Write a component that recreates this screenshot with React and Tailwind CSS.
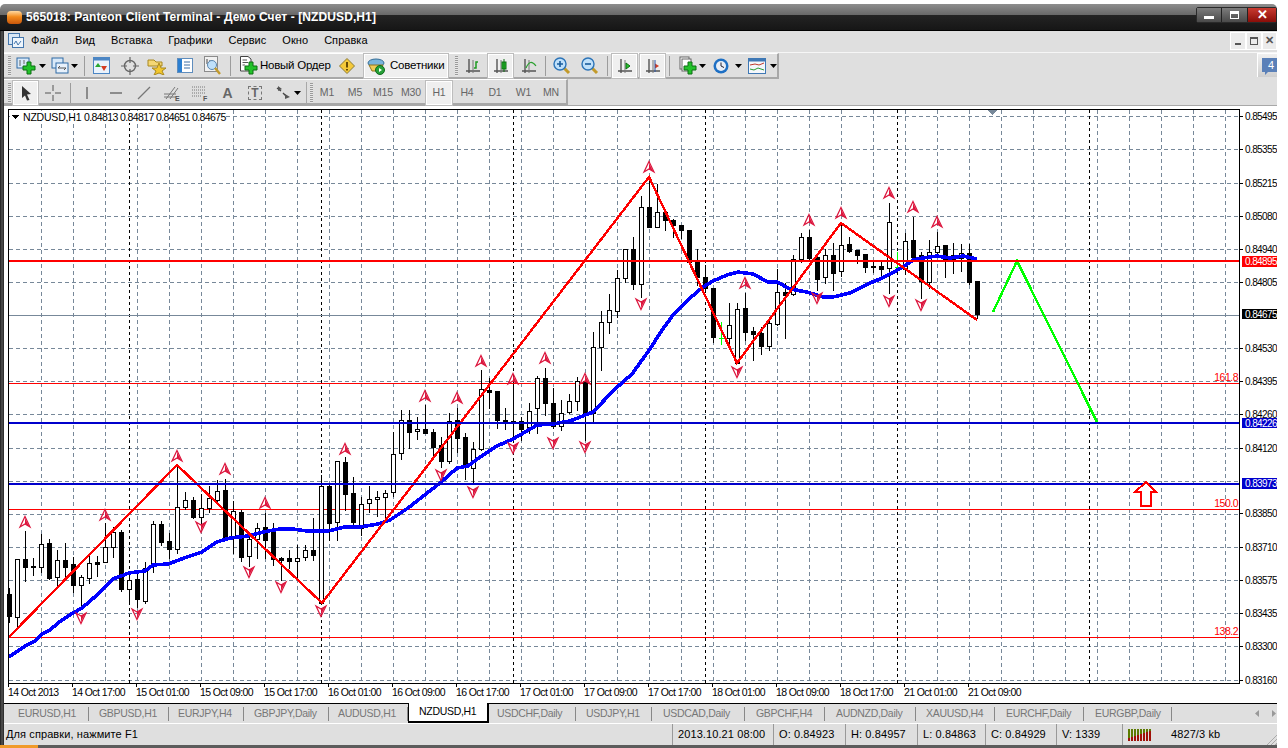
import React from 'react';

// hi, top, bottom, lo, black (1) / white (0) / green doji (2) -- first bar at x=9, 8px apart
const candles = [
  [588,594,616,622,1],[559,559,617,627,0],[531,559,567,581,1],[558,566,567,575,1],[534,544,567,572,0],
  [539,543,578,579,1],[550,560,577,587,0],[543,560,567,580,1],[557,564,585,592,1],[575,577,585,608,0],
  [555,563,578,583,0],[556,562,564,576,1],[523,547,562,562,0],[527,532,547,557,0],[530,532,589,591,1],
  [572,580,589,603,0],[572,579,599,607,1],[562,568,601,603,0],[521,524,566,572,0],[521,524,542,545,1],
  [533,541,549,558,1],[465,507,549,553,0],[492,500,507,509,0],[497,500,517,518,1],[494,508,517,523,0],
  [486,498,508,512,0],[480,491,500,503,0],[479,490,537,537,1],[501,511,537,553,0],[510,512,557,561,1],
  [537,539,556,566,0],[523,528,539,558,0],[513,527,540,558,1],[523,531,559,565,1],[557,558,560,580,1],
  [550,558,561,568,1],[545,558,561,580,0],[545,550,557,560,0],[518,550,555,560,1],[475,486,603,603,0],
  [485,486,523,540,1],[461,461,522,540,0],[457,462,494,510,1],[477,493,522,528,1],[497,504,528,535,0],
  [486,499,503,512,0],[491,497,499,516,0],[490,493,497,518,0],[432,454,492,496,0],[410,420,453,459,0],
  [410,420,432,448,1],[417,429,431,439,0],[405,429,433,433,1],[429,432,447,455,1],[437,445,461,467,1],
  [413,421,461,463,0],[408,420,438,452,1],[433,437,466,479,1],[442,449,468,483,0],[370,389,449,450,0],
  [378,390,392,408,1],[391,391,420,428,1],[408,420,421,429,1],[384,421,422,440,1],[417,421,429,440,1],
  [403,411,427,433,0],[376,378,408,433,0],[368,378,403,415,1],[388,403,426,428,1],[400,413,426,430,0],
  [394,401,412,413,0],[377,381,401,410,0],[378,381,414,440,1],[332,347,413,423,0],[311,322,347,370,0],
  [294,310,322,333,0],[270,278,311,317,0],[249,249,278,282,0],[237,249,284,289,1],[196,207,284,297,0],
  [178,207,227,227,1],[184,212,227,227,0],[212,212,220,230,1],[219,220,225,237,1],[225,225,230,238,1],
  [230,230,262,263,1],[249,262,277,285,1],[265,277,288,290,1],[288,288,337,342,1],[322,338,338,344,2],
  [303,325,338,343,0],[303,309,363,363,0],[293,308,332,340,1],[327,331,334,360,1],[327,333,346,354,1],
  [321,323,346,350,0],[269,292,324,325,0],[283,292,295,338,1],[255,259,294,295,0],[233,237,259,262,0],
  [230,237,258,259,1],[257,257,279,290,1],[249,255,277,283,0],[243,255,273,290,1],[223,245,271,276,0],
  [237,244,251,252,1],[250,250,255,263,1],[254,254,267,272,1],[260,266,267,272,1],[262,266,269,278,1],
  [203,222,268,293,0],[252,267,267,267,2],[233,241,269,274,0],[217,240,257,260,1],[252,255,281,298,1],
  [240,252,282,288,0],[232,246,252,256,0],[245,245,260,277,1],[243,255,259,273,1],[244,253,258,271,0],
  [244,253,282,284,1],[281,281,314,318,1],
];

const maLine = [[9,657],[25,646],[35,641],[42,634],[50,630],[58,623],[73,613],[82,608],[97,595],[113,579],[129,573],[145,571],[153,565],[168,564],[187,557],[202,552],[217,542],[230,538],[248,536],[263,532],[280,529],[293,529],[307,531],[328,531],[345,527],[360,527],[378,524],[390,520],[408,508],[440,483],[457,468],[468,466],[480,457],[497,446],[513,439],[537,425],[553,424],[570,421],[593,412],[615,389],[632,374],[637,367],[650,349],[660,333],[673,315],[690,298],[703,287],[713,281],[727,275],[738,272],[753,274],[768,282],[777,282],[790,289],[807,292],[823,297],[833,297],[850,293],[870,283],[880,279],[890,274],[903,267],[913,260],[923,258],[937,256],[950,258],[963,256],[977,259]];

const zigzag = '9,637 177,465 322,603 649,177 737,363 841,223 977,320';
const forecast = '993,312 1017,261 1098,424';

const upMarks = [[25,522],[105,515],[177,456],[225,469],[265,503],[345,449],[425,396],[457,398],[481,361],[513,379],[545,358],[585,379],[649,167],[745,283],[809,220],[841,213],[889,193],[913,207],[937,222]];
const downMarks = [[81,618],[137,614],[201,527],[249,572],[281,587],[321,611],[441,475],[473,492],[513,448],[553,443],[585,447],[641,304],[737,372],[817,298],[889,301],[921,305]];

const priceLabels = [[116,'0.85495'],[149,'0.85355'],[183,'0.85215'],[216,'0.85080'],[249,'0.84940'],[282,'0.84805'],[348,'0.84530'],[381,'0.84395'],[414,'0.84260'],[448,'0.84120'],[513,'0.83850'],[547,'0.83710'],[580,'0.83575'],[613,'0.83435'],[646,'0.83300'],[680,'0.83160']];
const gridY = [116,149,183,216,249,282,348,381,414,448,481,514,547,580,613,646,680];
const timeLabels = ['14 Oct 2013','14 Oct 17:00','15 Oct 01:00','15 Oct 09:00','15 Oct 17:00','16 Oct 01:00','16 Oct 09:00','16 Oct 17:00','17 Oct 01:00','17 Oct 09:00','17 Oct 17:00','18 Oct 01:00','18 Oct 09:00','18 Oct 17:00','21 Oct 01:00','21 Oct 09:00'];

const Fractal = ({ x, y, flip }) => (
  <g transform={`translate(${x} ${y}) scale(1 ${flip ? -1 : 1})`} shapeRendering="auto">
    <path d="M0 -5.5 L5 5 L0 2 L-5 5 Z" fill="none" stroke="#dc143c" strokeWidth="1.2" />
    <path d="M0 -4 L4 4 L0 2 Z" fill="#dc143c" />
  </g>
);

const Candle = ({ c, i }) => {
  const x = 9 + i * 8;
  const [hi, top, bot, lo, kind] = c;
  const color = kind === 2 ? '#00ff00' : '#000';
  return (
    <g>
      <rect x={x} y={hi} width="1" height={lo - hi + 1} fill={color} />
      {bot - top <= 1 || kind === 2 ? (
        <rect x={x - 2} y={top} width="5" height={bot - top + 1} fill={kind === 0 ? '#fff' : color} stroke={kind === 0 ? '#000' : 'none'} />
      ) : kind === 1 ? (
        <rect x={x - 2} y={top} width="5" height={bot - top + 1} fill="#000" />
      ) : (
        <rect x={x - 1.5} y={top + 0.5} width="4" height={bot - top} fill="#fff" stroke="#000" />
      )}
    </g>
  );
};

const PriceBox = ({ y, h, bg, text }) => (
  <g>
    <rect x="1242" y={y} width="36" height={h} fill={bg} />
    <text x="1245" y={y + h / 2 + 3.5} fill="#fff" className="text-[10px] tracking-[-0.6px]">{text}</text>
  </g>
);

const Chart = () => (
  <svg viewBox="4 106 1273 597" width="1273" height="597" shapeRendering="crispEdges" className="block">
    <rect x="4" y="106" width="1273" height="597" fill="#fff" />
    {gridY.map(y => <line key={y} x1="9" x2="1239" y1={y + 0.5} y2={y + 0.5} stroke="#778899" strokeDasharray="4 3" />)}
    {Array.from({ length: 38 }, (_, k) => 41 + k * 32).map(x => (
      <line key={x} x1={x + 0.5} x2={x + 0.5} y1="110" y2="683" stroke="#778899" strokeDasharray="4 3" />
    ))}
    {[129, 321, 513, 705, 897, 1089].map(x => (
      <line key={x} x1={x + 0.5} x2={x + 0.5} y1="110" y2="683" stroke="#000" strokeDasharray="3 3" />
    ))}
    <line x1="9" x2="1239" y1="315.5" y2="315.5" stroke="#778899" />
    <line x1="9" x2="1239" y1="383.5" y2="383.5" stroke="#ff0000" />
    <line x1="9" x2="1239" y1="509.5" y2="509.5" stroke="#ff0000" />
    <line x1="9" x2="1239" y1="637.5" y2="637.5" stroke="#ff0000" />

    {candles.map((c, i) => <Candle key={i} c={c} i={i} />)}

    <polyline points={maLine.map(p => p.join(',')).join(' ')} fill="none" stroke="#0000ff" strokeWidth="3.6" />
    <polyline points={zigzag} fill="none" stroke="#ff0000" strokeWidth="2.4" />
    <polyline points={forecast} fill="none" stroke="#00ff00" strokeWidth="2.4" />
    <line x1="9" x2="1239" y1="261" y2="261" stroke="#ff0000" strokeWidth="2" />
    <line x1="9" x2="1239" y1="423" y2="423" stroke="#0000cc" strokeWidth="2" />
    <line x1="9" x2="1239" y1="484" y2="484" stroke="#0000cc" strokeWidth="2" />

    {upMarks.map(([x, y]) => <Fractal key={`u${x}`} x={x} y={y} />)}
    {downMarks.map(([x, y]) => <Fractal key={`d${x}`} x={x} y={y} flip />)}

    <path d="M1146 482 L1156 492 L1151 492 L1151 506 L1141 506 L1141 492 L1135 492 Z" fill="#fff" stroke="#ff0000" strokeWidth="2" />
    <path d="M988 110 L997 110 L992.5 115 Z" fill="#778899" />

    <rect x="8.5" y="109.5" width="1231" height="574" fill="none" stroke="#000" />

    <rect x="10" y="111" width="215" height="12" fill="#fff" />
    <path d="M12 115 L19 115 L15.5 119 Z" fill="#000" />
    <text x="23" y="120.5" fill="#000" className="text-[10.5px] tracking-[-0.2px]">NZDUSD,H1</text>
    <text x="84" y="120.5" fill="#000" className="text-[10.5px] tracking-[-0.6px]">0.84813</text>
    <text x="120" y="120.5" fill="#000" className="text-[10.5px] tracking-[-0.6px]">0.84817</text>
    <text x="156" y="120.5" fill="#000" className="text-[10.5px] tracking-[-0.6px]">0.84651</text>
    <text x="192" y="120.5" fill="#000" className="text-[10.5px] tracking-[-0.6px]">0.84675</text>

    <text x="1238" y="381" textAnchor="end" fill="#ff0000" className="text-[10.5px] tracking-[-0.5px]">161.8</text>
    <text x="1238" y="507" textAnchor="end" fill="#ff0000" className="text-[10.5px] tracking-[-0.5px]">150.0</text>
    <text x="1238" y="635" textAnchor="end" fill="#ff0000" className="text-[10.5px] tracking-[-0.5px]">138.2</text>

    {priceLabels.map(([y, t]) => (
      <g key={t}>
        <rect x="1240" y={y} width="3" height="1" fill="#000" />
        <text x="1245" y={y + 3.5} fill="#000" className="text-[10px] tracking-[-0.6px]">{t}</text>
      </g>
    ))}
    <PriceBox y={256} h={11} bg="#ff0000" text="0.84895" />
    <PriceBox y={309} h={10} bg="#000" text="0.84675" />
    <PriceBox y={418} h={10} bg="#0000cc" text="0.84226" />
    <PriceBox y={478} h={11} bg="#0000cc" text="0.83973" />

    {timeLabels.map((t, i) => (
      <g key={t}>
        <rect x={8 + i * 64} y="684" width="1" height="3" fill="#000" />
        <text x={8 + i * 64} y="696" fill="#000" className="text-[10.5px] tracking-[-0.6px]">{t}</text>
      </g>
    ))}
  </svg>
);

/* ---- toolbar icons ---- */
const Ico = ({ children, w = 20, h = 20, className = '' }) => (
  <svg viewBox={`0 0 ${w} ${h}`} width={w} height={h} className={`block shrink-0 ${className}`}>{children}</svg>
);
const Caret = ({ className = '' }) => <svg width="7" height="4" className={`shrink-0 ${className}`}><path d="M0 0 H7 L3.5 4 Z" fill="#000" /></svg>;
const Plus = ({ x = 8, y = 8 }) => (
  <path transform={`translate(${x} ${y})`} d="M4 0 H8 V4 H12 V8 H8 V12 H4 V8 H0 V4 H4 Z" fill="#22c22a" stroke="#0c6e12" />
);
const AxisBars = ({ children }) => (
  <Ico w={18} h={18}>
    <path d="M5 2 V16 M2 14 H16" stroke="#555" strokeWidth="1.4" fill="none" />
    <path d="M9 3 V16" stroke="#777" fill="none" />
    {children}
  </Ico>
);
const Glass = ({ sign }) => (
  <Ico w={18} h={18}>
    <path d="M11 11 L16 16" stroke="#c29a2b" strokeWidth="3" />
    <circle cx="7" cy="7" r="6" fill="#bfe0fa" stroke="#2c74b8" strokeWidth="1.4" />
    <path d={sign === '+' ? 'M4 7 H10 M7 4 V10' : 'M4 7 H10'} stroke="#1a5c9c" strokeWidth="1.6" />
  </Ico>
);

const Grip = ({ className = '' }) => <div className={`w-[3px] h-[20px] shrink-0 [background:repeating-linear-gradient(#9a9a9a_0_1px,#e8e8e8_1px_2px)] ${className}`} />;
const Sep = ({ className = '' }) => <div className={`w-[2px] h-[20px] shrink-0 border-l border-[#9c9c9c] ${className}`} />;
const Active = ({ children, className = 'w-[26px]' }) => (
  <div className={`h-[24px] flex items-center justify-center shrink-0 bg-[#efefef] border border-white outline outline-1 outline-[#bdbdbd] ${className}`}>{children}</div>
);
const Slot = ({ children, className = 'w-[28px]' }) => <div className={`h-[24px] flex items-center justify-center shrink-0 ${className}`}>{children}</div>;

const Toolbar1 = () => (
  <div className="h-[26px] flex items-center pl-[4px] w-[775px] border-b-2 border-r-2 border-[#a8a8a8] border-t border-t-white">
    <Grip />
    <Slot className="w-[27px] ml-[1px]"><Ico w={20} h={20}><rect x="1" y="2" width="12" height="10" fill="#d9e9f8" stroke="#2f6aa5" /><path d="M4 4 V10 M8 4 V8" stroke="#666" /><Plus x={7} y={6} /></Ico></Slot>
    <Caret />
    <Slot className="w-[22px] ml-[3px]"><Ico w={18} h={18}><rect x="1" y="1" width="11" height="10" fill="#d9e9f8" stroke="#2f6aa5" /><rect x="5" y="6" width="12" height="10" fill="#e8f1fb" stroke="#2f6aa5" /><path d="M7 11 H15 M7 11 l2 -2 M15 11 l-2 2" stroke="#555" fill="none" /></Ico></Slot>
    <Caret />
    <Sep className="ml-[6px]" />
    <Slot className="w-[28px] ml-[1px]"><Ico w={17} h={17}><rect x="0.5" y="0.5" width="16" height="16" fill="#eaf3fc" stroke="#4c86c4" /><rect x="0.5" y="0.5" width="16" height="3" fill="#4c86c4" /><path d="M5 6 L8 10 H2 Z" fill="#2aa832" /><path d="M11 14 L8 9 H14 Z" fill="#d43c22" /></Ico></Slot>
    <Slot className="w-[28px] ml-[1px]"><Ico w={18} h={18}><circle cx="9" cy="9" r="5.5" fill="none" stroke="#666" strokeWidth="1.4" /><path d="M9 0 V6 M9 12 V18 M0 9 H6 M12 9 H18" stroke="#666" strokeWidth="1.2" /></Ico></Slot>
    <Slot className="w-[24px]"><Ico w={19} h={18}><path d="M1 3 H7 L9 5 H15 V9 H1 Z" fill="#f4d774" stroke="#a88820" /><path d="M12 6 L14 11 L19 11 L15 14 L17 18 L12 16 L7 18 L9 14 L5 11 L10 11 Z" fill="#f2c72e" stroke="#a88820" /></Ico></Slot>
    <Slot className="w-[28px] ml-[3px]"><Ico w={17} h={17}><rect x="0.5" y="1.5" width="15" height="14" fill="#fff" stroke="#5f8dbd" /><rect x="1" y="2" width="4" height="13" fill="#2b7fd1" /><path d="M7 5 H13 M7 8 H13 M7 11 H13" stroke="#3f6fa3" /></Ico></Slot>
    <Slot className="w-[28px]"><Ico w={18} h={19}><rect x="0.5" y="0.5" width="13" height="15" fill="#f1f1f1" stroke="#8b8b8b" /><path d="M3 3 V8 M6 4 V10" stroke="#444" /><circle cx="8" cy="9" r="4.5" fill="#bfe0fa" stroke="#5a86ae" /><path d="M11 12 L16 18" stroke="#c29a2b" strokeWidth="2.4" /></Ico></Slot>
    <Sep className="ml-[3px]" />
    <Slot className="w-[20px] ml-[6px]"><Ico w={19} h={19}><path d="M1.5 0.5 H9 L12 3 V15 H1.5 Z" fill="#fff" stroke="#444" /><path d="M3.5 4 H8 M3.5 6.5 H9 M3.5 9 H6" stroke="#555" /><Plus x={6} y={6} /></Ico></Slot>
    <span className="text-[11.5px] text-black ml-[2px] w-[70px] tracking-[-0.25px] whitespace-nowrap">Новый Ордер</span>
    <Slot className="w-[28px] ml-[3px]"><Ico w={16} h={16}><path d="M8 0.5 L15.5 8 L8 15.5 L0.5 8 Z" fill="#f5c93a" stroke="#8a7a36" /><path d="M8 4 V9.5 M8 11 V12.5" stroke="#5a3f00" strokeWidth="1.8" /></Ico></Slot>
    <Active className="w-[84px] ml-[3px] gap-[4px] pl-[2px] justify-start">
      <Ico w={19} h={18}><ellipse cx="9" cy="6" rx="8" ry="4" fill="#79b4dc" stroke="#356d96" /><path d="M2 8 L5 14 H13 L16 8 Z" fill="#f0cb55" stroke="#8e7520" /><circle cx="13" cy="13" r="4.5" fill="#26a038" stroke="#0e6a1c" /><path d="M12 11 L15 13 L12 15 Z" fill="#fff" /></Ico>
      <span className="text-[11.5px] text-black whitespace-nowrap tracking-[-0.2px]">Советники</span>
    </Active>
    <Grip className="ml-[7px]" />
    <Slot className="w-[28px] ml-[1px]"><AxisBars><path d="M10 11 H12 V5 H14" stroke="#1e9a22" strokeWidth="1.5" fill="none" /></AxisBars></Slot>
    <Active className="w-[25px] ml-[1px]"><AxisBars><rect x="10" y="5" width="4" height="7" fill="#26c42c" stroke="#0c6e12" /><path d="M12 2 V15" stroke="#0c6e12" /></AxisBars></Active>
    <Slot className="w-[28px] ml-[2px]"><AxisBars><path d="M6 11 C9 4 12 4 16 9" stroke="#2aa02e" strokeWidth="1.2" fill="none" /></AxisBars></Slot>
    <Sep className="ml-[2px]" />
    <Slot className="w-[28px] ml-[1px]"><Glass sign="+" /></Slot>
    <Slot className="w-[28px]"><Glass sign="-" /></Slot>
    <Sep className="ml-[3px]" />
    <Active className="w-[25px] ml-[3px]"><AxisBars><path d="M10 6 L14 9 L10 12 Z" fill="#26c42c" stroke="#0c6e12" /></AxisBars></Active>
    <Active className="w-[25px] ml-[3px]"><AxisBars><path d="M15 9 L11 6.5 V11.5 Z" fill="#d43c22" /><path d="M11 3 V15" stroke="#2b57a8" /></AxisBars></Active>
    <Sep className="ml-[4px]" />
    <Slot className="w-[20px] ml-[7px]"><Ico w={18} h={19}><rect x="1" y="1" width="9" height="12" fill="#fff" stroke="#666" /><rect x="3" y="3" width="9" height="12" fill="#fff" stroke="#666" /><Plus x={5} y={6} /></Ico></Slot>
    <Caret className="ml-[1px]" />
    <Slot className="w-[18px] ml-[6px]"><Ico w={16} h={16}><circle cx="8" cy="8" r="7.5" fill="#1d6fc4" /><circle cx="8" cy="8" r="5" fill="#e8eef6" /><path d="M8 4.5 V8 L11 9.5" stroke="#223" fill="none" /></Ico></Slot>
    <Caret className="ml-[5px]" />
    <Slot className="w-[20px] ml-[5px]"><Ico w={18} h={16}><rect x="0.5" y="0.5" width="17" height="15" fill="#f4f7fb" stroke="#3f78b5" /><rect x="0.5" y="0.5" width="17" height="3" fill="#3f78b5" /><path d="M2 7 L7 6 L11 7 L16 5" stroke="#c0392b" fill="none" /><path d="M2 11 L6 12 L10 10 L16 12" stroke="#2a9a34" fill="none" /></Ico></Slot>
    <Caret className="ml-[3px]" />
  </div>
);

const Toolbar2 = () => (
  <div className="h-[26px] flex items-center pl-[4px] pt-[2px] w-[564px] border-b-2 border-r-2 border-[#a8a8a8] border-t border-t-white">
    <Grip />
    <Active className="w-[25px] ml-[2px]"><Ico w={14} h={16}><path d="M3 1 L12 9 L8 9.5 L10.5 15 L8 15.5 L6 10.5 L3 13 Z" fill="#333" /></Ico></Active>
    <Slot className="w-[26px] ml-[2px]"><Ico w={16} h={16}><path d="M8 0 V6 M8 10 V16 M0 8 H6 M10 8 H16" stroke="#555" /></Ico></Slot>
    <Sep className="ml-[4px]" />
    <Slot className="w-[28px] ml-[1px]"><Ico w={6} h={14}><path d="M3 1 V13" stroke="#555" strokeWidth="1.2" /></Ico></Slot>
    <Slot className="w-[28px] ml-[1px]"><Ico w={14} h={4}><path d="M1 2 H13" stroke="#555" strokeWidth="1.2" /></Ico></Slot>
    <Slot className="w-[28px]"><Ico w={14} h={14}><path d="M1 13 L13 1" stroke="#777" strokeWidth="1.2" /></Ico></Slot>
    <Slot className="w-[28px]"><Ico w={18} h={16}><path d="M1 9 H13 M1 12 H13 M3 14 L12 2 M7 14 L15 3" stroke="#777" /><text x="12" y="16" fill="#555" className="text-[7px] font-bold">E</text></Ico></Slot>
    <Slot className="w-[28px]"><Ico w={18} h={16}><path d="M1 2 H15 M1 5 H15 M1 8 H15 M1 11 H11" stroke="#777" strokeDasharray="1 1" /><text x="12" y="16" fill="#555" className="text-[7px] font-bold">F</text></Ico></Slot>
    <Slot className="w-[27px]"><span className="text-[14px] font-bold text-[#666] leading-none">A</span></Slot>
    <Slot className="w-[28px]"><div className="w-[14px] h-[14px] border border-dashed border-[#777] flex items-center justify-center text-[12px] font-bold text-[#666] leading-none">T</div></Slot>
    <Slot className="w-[17px] ml-[6px]"><Ico w={17} h={14}><path d="M2 2 L6 5 M8 7 L12 11" stroke="#444" strokeWidth="1.4" /><path d="M3 0 L7 3 L3 5 Z M10 8 L15 11 L10 13 Z" fill="#555" /></Ico></Slot>
    <Caret className="ml-[2px]" />
    <div className="h-[22px] w-[2px] ml-[5px] border-l border-[#a8a8a8]" />
    <Grip className="ml-[2px]" />
    <div className="flex items-center text-[10.5px] text-[#666] tracking-[-0.1px]">
      <Slot>M1</Slot>
      <Slot>M5</Slot>
      <Slot>M15</Slot>
      <Slot>M30</Slot>
      <Active className="w-[26px] ml-[1px]">H1</Active>
      <Slot className="w-[28px] ml-[1px]">H4</Slot>
      <Slot>D1</Slot>
      <Slot className="w-[29px]">W1</Slot>
      <Slot className="w-[26px]">MN</Slot>
    </div>
  </div>
);

const tabs = [
  ['EURUSD,H1', 'w-[85px] pl-[14px]'], ['GBPUSD,H1', 'w-[80px] pl-[10px]'], ['EURJPY,H4', 'w-[75px] pl-[9px]'], ['GBPJPY,Daily', 'w-[85px] pl-[10px]'],
  ['AUDUSD,H1', 'w-[79px] pl-[9px]'], ['NZDUSD,H1', 'w-[81px] pl-[10px]', true], ['USDCHF,Daily', 'w-[87px] pl-[8px]'], ['USDJPY,H1', 'w-[76px] pl-[10px]'],
  ['USDCAD,Daily', 'w-[93px] pl-[11px]'], ['GBPCHF,H4', 'w-[80px] pl-[11px]'], ['AUDNZD,Daily', 'w-[91px] pl-[11px]'], ['XAUUSD,H4', 'w-[79px] pl-[10px]'],
  ['EURCHF,Daily', 'w-[89px] pl-[11px]'], ['EURGBP,Daily', 'w-[88px] pl-[11px]'],
];

const statusCells = [
  ['2013.10.21 08:00', 'w-[101px]'], ['O: 0.84923', 'w-[72px]'], ['H: 0.84957', 'w-[72px]'],
  ['L: 0.84863', 'w-[68px]'], ['C: 0.84929', 'w-[71px]'], ['V: 1339', 'w-[66px]'],
];

const signalBars = [3, 4, 5, 6, 7, 8, 9, 10];

const App = () => {
  return (
    <div className="w-[1288px] h-[748px] bg-white overflow-hidden font-['Liberation_Sans',sans-serif] flex">
      <div className="w-[1277px] h-[748px] pt-[4px] flex flex-col">
        {/* title bar */}
        <div className="h-[27px] shrink-0 rounded-t-[5px] border-b border-black bg-[linear-gradient(#8d8d8d_0,#686868_42%,#232323_44%,#161616_100%)] flex items-center pl-[7px] relative">
          <div className="w-[15px] h-[13px] rounded-[4px] bg-[linear-gradient(#ffd9a0,#f28a1c_45%,#c8560c)]" />
          <span className="ml-[4px] text-white font-bold text-[12px] tracking-[0.1px] whitespace-nowrap">565018: Panteon Client Terminal - Демо Счет - [NZDUSD,H1]</span>
          <div className="ml-auto mt-[-5px] flex h-[16px] border border-[#2a2a2a] rounded-[2px]">
            <div className="w-[25px] bg-[linear-gradient(#7c7c7c,#4a4a4a)] border-r border-[#222] flex items-end justify-center pb-[3px]"><div className="w-[10px] h-[3px] bg-white" /></div>
            <div className="w-[26px] bg-[linear-gradient(#7c7c7c,#4a4a4a)] border-r border-[#222] flex items-center justify-center"><div className="w-[9px] h-[8px] border border-t-[3px] border-white" /></div>
            <div className="w-[28px] bg-[linear-gradient(#c83a30,#8a0d08)] flex items-center justify-center text-white font-bold text-[13px] leading-none">✕</div>
          </div>
        </div>

        <div className="flex-1 min-h-0 flex">
          <div className="w-[4px] shrink-0 bg-[linear-gradient(90deg,#1c1c1c,#555_50%,#222)]" />
          <div className="w-[1273px] flex flex-col bg-[#dfdfdf]">
            {/* menu */}
            <div className="h-[22px] shrink-0 flex items-center pb-[2px] border-b border-[#f6f6f6] text-[11px] tracking-[0.05px] text-black">
              <div className="w-[27px] pl-[4px]">
                <Ico w={16} h={15}><rect x="0.5" y="0.5" width="11" height="11" fill="#d6e6f6" stroke="#4577ad" /><rect x="4.5" y="4.5" width="11" height="10" fill="#eef5fc" stroke="#4577ad" /><path d="M6 11 L8 8 L10 12 L13 8" stroke="#4577ad" fill="none" /></Ico>
              </div>
              <div className="flex gap-[16px]">
                <span className="w-[28px]">Файл</span><span>Вид</span><span>Вставка</span><span>Графики</span><span>Сервис</span><span>Окно</span><span>Справка</span>
              </div>
              <div className="ml-auto flex h-[18px]">
                <div className="w-[16px] bg-[#ebebeb] border border-white flex items-end justify-center pb-[4px]"><div className="w-[6px] h-[2px] bg-[#555]" /></div>
                <div className="w-[16px] bg-[#ebebeb] border border-white flex items-center justify-center"><div className="w-[8px] h-[8px] border border-t-2 border-[#555]" /></div>
                <div className="w-[15px] bg-[#ebebeb] border border-white flex items-center justify-center text-[#555] font-bold text-[11px] leading-none">✕</div>
              </div>
            </div>

            {/* toolbars */}
            <div className="flex justify-between">
              <Toolbar1 />
              <div className="w-[20px] h-[24px] pt-[2px] bg-[linear-gradient(#f0f0f0,#cfcfcf)] border-l border-t border-white flex items-center justify-end relative">
                <svg width="15" height="17" className="block"><path d="M0 0 H15 V14 H6 L3 17 V14 H0 Z" fill="#5a80b8" /></svg>
                <span className="absolute right-[3px] top-[6px] text-[11px] text-white leading-none">4</span>
              </div>
            </div>
            <div className="border-b border-[#a8a8a8]">
              <Toolbar2 />
            </div>
            <Chart />

            {/* symbol tabs */}
            <div className="h-[20px] shrink-0 flex items-stretch border-t border-black text-[10.5px] tracking-[-0.3px] text-[#777] relative">
              {tabs.map(([name, w, active]) => (
                <div key={name} className={active
                  ? `${w} -mt-px flex items-center bg-white text-black border-x border-black border-b-2 border-r-2 shrink-0`
                  : `${w} flex items-center shrink-0 relative after:content-[''] after:absolute after:right-0 after:top-[3px] after:h-[14px] after:w-px after:bg-[#888]`}>
                  {name}
                </div>
              ))}
              <svg className="absolute right-[1px] top-[6px]" width="21" height="7"><path d="M0 3.5 L4 0 V7 Z M21 3.5 L17 0 V7 Z" fill="#999" /></svg>
            </div>
            <div className="h-px shrink-0 bg-white" />

            {/* status bar */}
            <div className="h-[21px] shrink-0 flex items-center text-[11px] tracking-[0.1px] text-black relative">
              <span className="pl-[2px] w-[668px] shrink-0">Для справки, нажмите F1</span>
              {statusCells.map(([t, w]) => (
                <div key={t} className={`${w} h-full flex items-center pl-[5px] border-l border-[#999] shrink-0 whitespace-nowrap`}>{t}</div>
              ))}
              <div className="w-[49px] h-full flex items-center pl-[5px] border-l border-[#999] shrink-0">
                <svg width="24" height="12" className="block">
                  {signalBars.map((h, i) => (
                    <g key={i}>
                      <rect x={i * 3} y="0" width="2" height={12 - h} fill="#5c7a00" />
                      <rect x={i * 3} y={12 - h} width="2" height={h} fill="#a01008" />
                    </g>
                  ))}
                </svg>
              </div>
              <span className="whitespace-nowrap">4827/3 kb</span>
              <div className="absolute right-0 bottom-0 w-[11px] h-[11px] [background:repeating-linear-gradient(135deg,transparent_0_2px,#aaa_2px_3px)] [clip-path:polygon(100%_0,100%_100%,0_100%)]" />
            </div>
          </div>
        </div>

        {/* bottom window edge */}
        <div className="h-[3px] shrink-0 bg-[#5c5c5c] relative">
          <div className="absolute left-0 top-0 h-[3px] w-[38px] bg-[#f09a2a]" />
        </div>
      </div>
    </div>
  );
};

export default App;
